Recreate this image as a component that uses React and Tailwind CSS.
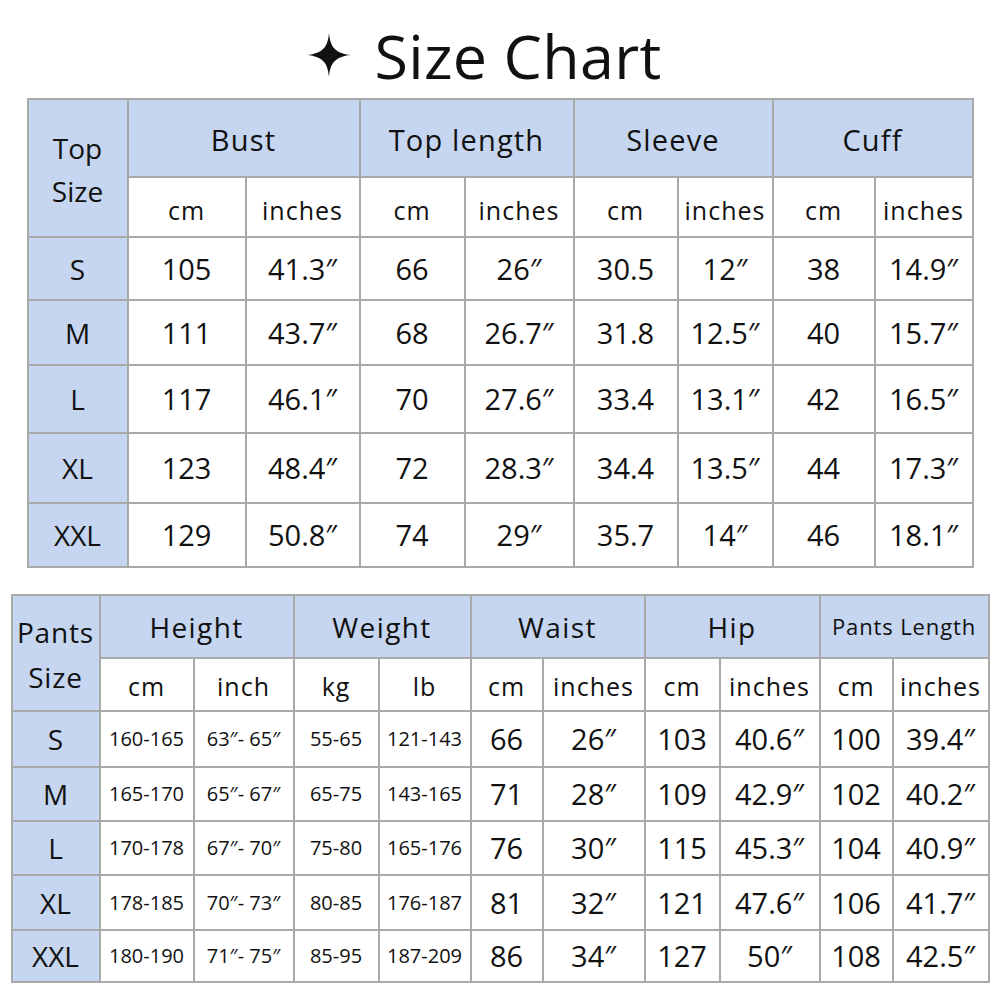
import React from 'react';

const cell = 'border-2 border-[#a9a9a9] p-0 text-center align-middle';
const blue = 'bg-[#c6d6f0]';

const TOP_COLS = ['w-[100px]', 'w-[118px]', 'w-[114px]', 'w-[105px]', 'w-[109px]', 'w-[104px]', 'w-[95px]', 'w-[102px]', 'w-[98px]'];
const TOP_ROW_H = ['h-[63px]', 'h-[65px]', 'h-[68px]', 'h-[70px]', 'h-[64px]'];
const TOP_ROWS = [
  ['S', '105', '41.3″', '66', '26″', '30.5', '12″', '38', '14.9″'],
  ['M', '111', '43.7″', '68', '26.7″', '31.8', '12.5″', '40', '15.7″'],
  ['L', '117', '46.1″', '70', '27.6″', '33.4', '13.1″', '42', '16.5″'],
  ['XL', '123', '48.4″', '72', '28.3″', '34.4', '13.5″', '44', '17.3″'],
  ['XXL', '129', '50.8″', '74', '29″', '35.7', '14″', '46', '18.1″'],
];

const PANTS_COLS = ['w-[88px]', 'w-[94px]', 'w-[100px]', 'w-[85px]', 'w-[92px]', 'w-[72px]', 'w-[102px]', 'w-[75px]', 'w-[100px]', 'w-[73px]', 'w-[96px]'];
const PANTS_ROW_H = ['h-[56px]', 'h-[54px]', 'h-[54px]', 'h-[55px]', 'h-[52px]'];
const PANTS_ROWS = [
  ['S', '160-165', '63″- 65″', '55-65', '121-143', '66', '26″', '103', '40.6″', '100', '39.4″'],
  ['M', '165-170', '65″- 67″', '65-75', '143-165', '71', '28″', '109', '42.9″', '102', '40.2″'],
  ['L', '170-178', '67″- 70″', '75-80', '165-176', '76', '30″', '115', '45.3″', '104', '40.9″'],
  ['XL', '178-185', '70″- 73″', '80-85', '176-187', '81', '32″', '121', '47.6″', '106', '41.7″'],
  ['XXL', '180-190', '71″- 75″', '85-95', '187-209', '86', '34″', '127', '50″', '108', '42.5″'],
];

function Sparkle() {
  return (
    <svg width="44" height="44" viewBox="0 0 24 24" className="shrink-0">
      <path d="M12 0C12.7 7.6 15.2 11.1 24 12C15.2 12.9 12.7 16.4 12 24C11.3 16.4 8.8 12.9 0 12C8.8 11.1 11.3 7.6 12 0Z" fill="#111" />
    </svg>
  );
}

function TopTable() {
  const groups = ['Bust', 'Top length', 'Sleeve', 'Cuff'];
  return (
    <table className="mx-auto border-collapse table-fixed">
      <colgroup>
        {TOP_COLS.map((c, i) => <col key={i} className={c} />)}
      </colgroup>
      <thead>
        <tr className="h-[78px]">
          <th rowSpan={2} className={`${cell} ${blue} font-normal text-[28px] leading-[43px] pt-1`}>Top<br />Size</th>
          {groups.map((g) => (
            <th key={g} colSpan={2} className={`${cell} ${blue} font-normal text-[29px] tracking-[0.04em] pt-1`}>{g}</th>
          ))}
        </tr>
        <tr className="h-[60px]">
          {groups.flatMap((g) => [
            <th key={g + 'cm'} className={`${cell} font-normal text-[25px] tracking-[0.04em] pt-2`}>cm</th>,
            <th key={g + 'in'} className={`${cell} font-normal text-[25px] tracking-[0.04em] pt-2`}>inches</th>,
          ])}
        </tr>
      </thead>
      <tbody>
        {TOP_ROWS.map((row, r) => (
          <tr key={row[0]} className={TOP_ROW_H[r]}>
            {row.map((v, i) => (
              <td key={i} className={`${cell} ${i === 0 ? blue + ' text-[28px]' : 'text-[29px]'}`}>{v}</td>
            ))}
          </tr>
        ))}
      </tbody>
    </table>
  );
}

function PantsTable() {
  const groups = [
    ['Height', 'cm', 'inch', 'text-[28px] tracking-[0.05em]'],
    ['Weight', 'kg', 'lb', 'text-[28px] tracking-[0.05em]'],
    ['Waist', 'cm', 'inches', 'text-[28px] tracking-[0.05em]'],
    ['Hip', 'cm', 'inches', 'text-[28px] tracking-[0.05em]'],
    ['Pants Length', 'cm', 'inches', 'text-[22px] tracking-[0.04em]'],
  ];
  return (
    <table className="mx-auto border-collapse table-fixed">
      <colgroup>
        {PANTS_COLS.map((c, i) => <col key={i} className={c} />)}
      </colgroup>
      <thead>
        <tr className="h-[63px]">
          <th rowSpan={2} className={`${cell} ${blue} font-normal text-[28px] leading-[45px] tracking-[0.03em] pt-1`}>Pants<br />Size</th>
          {groups.map(([g, , , t]) => (
            <th key={g} colSpan={2} className={`${cell} ${blue} font-normal ${t}`}>{g}</th>
          ))}
        </tr>
        <tr className="h-[53px]">
          {groups.flatMap(([g, a, b]) => [
            <th key={g + a} className={`${cell} font-normal text-[25px] tracking-[0.04em] pt-1`}>{a}</th>,
            <th key={g + b} className={`${cell} font-normal text-[25px] tracking-[0.04em] pt-1`}>{b}</th>,
          ])}
        </tr>
      </thead>
      <tbody>
        {PANTS_ROWS.map((row, r) => (
          <tr key={row[0]} className={PANTS_ROW_H[r]}>
            {row.map((v, i) => (
              <td
                key={i}
                className={`${cell} ${i === 0 ? blue + ' text-[28px]' : i < 5 ? 'text-[20px]' : 'text-[29px]'}`}
              >
                {v}
              </td>
            ))}
          </tr>
        ))}
      </tbody>
    </table>
  );
}

export default function App() {
  return (
    <div className="w-[1000px] h-[1000px] bg-white text-[#111] font-['Open_Sans',sans-serif]">
      <div className="h-[98px] flex items-center justify-center gap-[24px] pt-[12px] pr-[32px]">
        <Sparkle />
        <h1 className="text-[61px] leading-none font-normal tracking-[0.005em]">Size Chart</h1>
      </div>
      <TopTable />
      <div className="h-[26px]" />
      <PantsTable />
    </div>
  );
}
